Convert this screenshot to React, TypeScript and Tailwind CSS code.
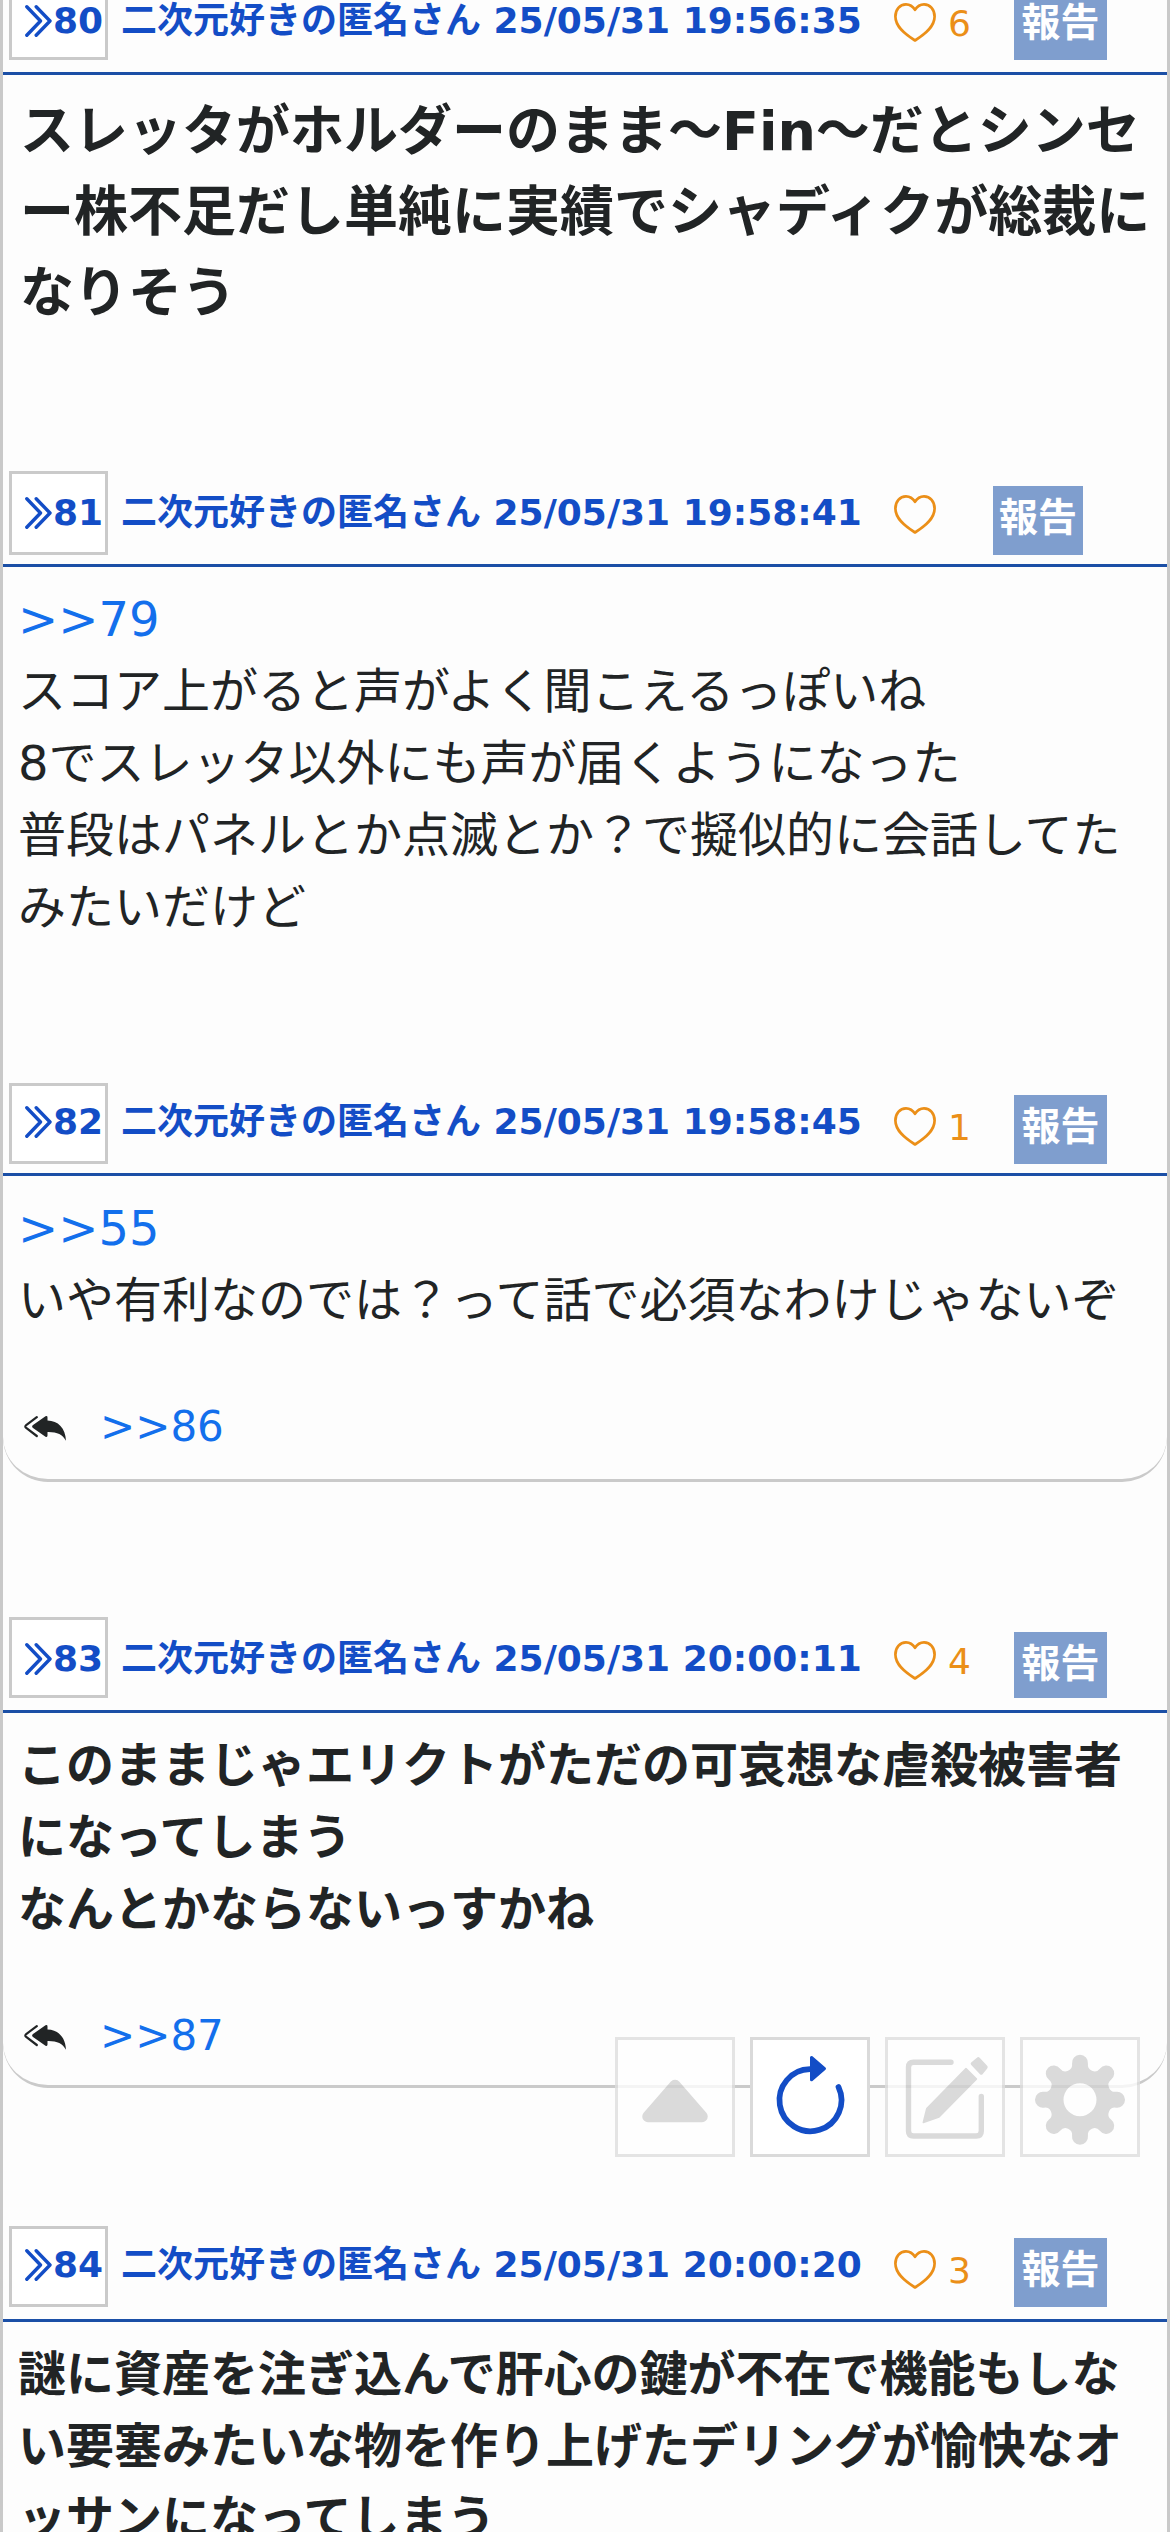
import type { ReactNode } from "react";
import clsx from "clsx";

type Post = {
  no: number;
  date: string;
  likes?: number;
  lines: ReactNode[];
  replies?: string;
  // spacing differs a little from post to post
  boxClass: string;
  titleClass: string;
  heartClass: string;
  countClass: string;
  reportClass: string;
  bodyClass: string;
  replyClass?: string;
  gapClass: string;
};

const posts: Post[] = [
  {
    no: 80,
    date: "25/05/31 19:56:35",
    likes: 6,
    lines: [
      "スレッタがホルダーのまま〜Fin〜だとシンセ",
      "ー株不足だし単純に実績でシャディクが総裁に",
      "なりそう",
    ],
    boxClass: "h-[84px] mb-3 pb-[18px]",
    titleClass: "mb-[33px]",
    heartClass: "mb-[30px]",
    countClass: "mb-[30px]",
    reportClass: "h-[69px] w-[93px] mb-3",
    bodyClass: "pl-[17px] text-[54px] leading-[81px] font-bold",
    gapClass: "mb-[137px]",
  },
  {
    no: 81,
    date: "25/05/31 19:58:41",
    lines: [
      <PostLink key="link">&gt;&gt;79</PostLink>,
      "スコア上がると声がよく聞こえるっぽいね",
      "8でスレッタ以外にも声が届くようになった",
      "普段はパネルとか点滅とか？で擬似的に会話してた",
      "みたいだけど",
    ],
    boxClass: "h-[84px] mb-[9px] pb-[21px]",
    titleClass: "mb-[33px]",
    heartClass: "mb-[30px]",
    countClass: "mb-[30px]",
    reportClass: "h-[69px] w-[90px] mb-[9px] -ml-[21px]",
    bodyClass: "pl-[15px] text-[48px] leading-[72px]",
    gapClass: "mb-[137px]",
  },
  {
    no: 82,
    date: "25/05/31 19:58:45",
    likes: 1,
    lines: [
      <PostLink key="link">&gt;&gt;55</PostLink>,
      "いや有利なのでは？って話で必須なわけじゃないぞ",
    ],
    replies: ">>86",
    boxClass: "h-[81px] mb-[9px] pb-[21px]",
    titleClass: "mb-[33px]",
    heartClass: "mb-[27px]",
    countClass: "mb-[27px]",
    reportClass: "h-[69px] w-[93px] mb-[9px]",
    bodyClass: "pl-[15px] text-[48px] leading-[72px]",
    replyClass: "h-[143px]",
    gapClass: "mb-[135px]",
  },
  {
    no: 83,
    date: "25/05/31 20:00:11",
    likes: 4,
    lines: [
      "このままじゃエリクトがただの可哀想な虐殺被害者",
      "になってしまう",
      "なんとかならないっすかね",
    ],
    replies: ">>87",
    boxClass: "h-[81px] mb-3 pb-[18px]",
    titleClass: "mb-[33px]",
    heartClass: "mb-[30px]",
    countClass: "mb-[30px]",
    reportClass: "h-[66px] w-[93px] mb-3",
    bodyClass: "pl-[15px] text-[48px] leading-[72px] font-bold",
    replyClass: "h-[140px]",
    gapClass: "mb-[138px]",
  },
  {
    no: 84,
    date: "25/05/31 20:00:20",
    likes: 3,
    lines: [
      "謎に資産を注ぎ込んで肝心の鍵が不在で機能もしな",
      "い要塞みたいな物を作り上げたデリングが愉快なオ",
      "ッサンになってしまう",
    ],
    boxClass: "h-[81px] mb-3 pb-[21px]",
    titleClass: "mb-9",
    heartClass: "mb-[30px]",
    countClass: "mb-[30px]",
    reportClass: "h-[69px] w-[93px] mb-3",
    bodyClass: "pl-[15px] text-[48px] leading-[72px] font-bold",
    gapClass: "mb-0",
  },
];

// eight round teeth joined by concave arcs
function gearPath(cx: number, cy: number) {
  const point = (deg: number) => {
    const a = (deg * Math.PI) / 180;
    return `${(cx + 36.83 * Math.cos(a)).toFixed(2)} ${(cy + 36.83 * Math.sin(a)).toFixed(2)}`;
  };
  let d = `M${point(-12.43)}`;
  for (let k = 0; k < 8; k++) {
    d += `A8 8 0 1 1 ${point(k * 45 + 12.43)}`;
    d += `A6.67 6.67 0 0 0 ${point((k + 1) * 45 - 12.43)}`;
  }
  return `${d}Z`;
}

function PostLink({ children }: { children: ReactNode }) {
  return <a className="text-[#136fec]">{children}</a>;
}

function ChevronsIcon() {
  return (
    <svg className="w-[27px] h-8 shrink-0" viewBox="0 0 27 32" fill="none" stroke="currentColor" strokeWidth={3.4} strokeLinecap="round" strokeLinejoin="round">
      <path d="M1.8 1.8 15.5 16 1.8 30.2M11.2 1.8 25 16 11.2 30.2" />
    </svg>
  );
}

function HeartIcon({ className }: { className?: string }) {
  return (
    <svg className={clsx("w-[42px] h-[39px] shrink-0", className)} viewBox="0 0 42 39" fill="none" stroke="#eb8f18" strokeWidth={2.7} strokeLinejoin="round">
      <path d="M21 6.8C18.6 3 15.6 1.4 12 1.4 5.8 1.4 1.4 6.5 1.4 13.5 1.4 24 11.5 31.5 21 37.5 30.5 31.5 40.6 24 40.6 13.5 40.6 6.5 36.2 1.4 30 1.4 26.4 1.4 23.4 3 21 6.8Z" />
    </svg>
  );
}

function ReplyIcon() {
  return (
    <svg className="mt-[3px] w-[42px] h-[25px] shrink-0" viewBox="0 0 42 25" fill="currentColor">
      <path d="M12.8 1.2 2.2 9q-1.8 1.5 0 3L12.8 20" fill="none" stroke="currentColor" strokeWidth={2.2} strokeLinecap="round" />
      <path d="M21.5.3q2-.8 2 1.2V4.6C34 4.8 41.5 12 42 24.8 38.5 18.5 33 15.8 23.500 16v3.6q0 2-2 1.2L9 12q-1.8-1.5 0-3Z" />
    </svg>
  );
}

function PostCard({ post }: { post: Post }) {
  return (
    <article className={clsx(post.gapClass, post.replies && "border-b-3 border-[#cacaca] rounded-b-[45px]")}>
      <header className="flex h-24 items-end border-b-3 border-[#1b4fa6] pl-1.5">
        <div className={clsx("flex w-[99px] shrink-0 items-end border-3 border-[#cacaca] bg-white pl-[13px]", post.boxClass)}>
          <a className="flex items-center gap-px text-[36px] leading-9 font-bold text-[#134dc6]">
            <ChevronsIcon />
            {post.no}
          </a>
        </div>
        <h2 className={clsx("ml-[13px] w-[773px] shrink-0 text-[36px] leading-9 font-bold whitespace-nowrap text-[#134dc6]", post.titleClass)}>
          二次元好きの匿名さん {post.date}
        </h2>
        <HeartIcon className={post.heartClass} />
        <span className={clsx("ml-3 w-[66px] shrink-0 text-[36px] leading-9 text-[#eb8f18]", post.countClass)}>{post.likes}</span>
        <button className={clsx("flex shrink-0 justify-center bg-[#7f9ece] pt-3 text-[39px] leading-10 font-bold text-white", post.reportClass)}>
          報告
        </button>
      </header>
      <div className={clsx("pt-4 whitespace-nowrap", post.bodyClass)}>
        {post.lines.map((line, i) => (
          <p key={i}>{line}</p>
        ))}
      </div>
      {post.replies && (
        <div className={clsx("flex items-start pt-[61px] pl-[21px]", post.replyClass)}>
          <div className="flex h-[60px] items-center gap-[34px] text-[42px] leading-[60px]">
            <ReplyIcon />
            <PostLink>{post.replies}</PostLink>
          </div>
        </div>
      )}
    </article>
  );
}

function ToolButton({ active, children }: { active?: boolean; children: ReactNode }) {
  return (
    <button
      className={clsx(
        "size-[120px] border-3 bg-white",
        active ? "border-[#dadada] text-[#134dc6]" : "border-[#dedede] text-[#d2d2d2] opacity-80",
      )}
    >
      <svg className="-m-[3px] size-[120px]" viewBox="0 0 120 120" fill="none" stroke="currentColor" strokeLinecap="round" strokeLinejoin="round">
        {children}
      </svg>
    </button>
  );
}

export default function App() {
  return (
    <div className="relative h-[2532px] w-[1170px] overflow-hidden bg-[#fdfdfd] font-['DejaVu_Sans','Noto_Sans_CJK_JP',sans-serif] text-[#212425]">
      <main className="h-[2532px] overflow-hidden border-x-3 border-[#c9c9c9]">
        <div className="-mt-[21px]">
          {posts.map((post) => (
            <PostCard key={post.no} post={post} />
          ))}
        </div>
      </main>

      {/* Floating tools */}
      <nav className="absolute top-[2037px] right-[30px] flex gap-[15px]">
        <ToolButton>
          <path d="M60 48.5 33 79.5H87Z" fill="currentColor" strokeWidth={11.5} />
        </ToolButton>
        <ToolButton active>
          <path d="M60 32.2A31 31 0 1 0 88.5 50" strokeWidth={5.7} />
          <path d="M61.5 20.5V42.8L74.5 31.7Z" fill="currentColor" strokeWidth={3} />
        </ToolButton>
        <ToolButton>
          <path d="M66 25.2H28.5Q23.5 25.2 23.5 30.2V94Q23.5 99 28.5 99H91.3Q96.3 99 96.3 94V59.5" strokeWidth={5.4} />
          <path d="M81 31.5 91.5 42 54 80 38.3 85.5 41.8 71.5Z" fill="currentColor" strokeWidth={1.5} />
          <path d="M93.2 22.2 100.7 30.2 96.2 35.7 87.7 26.7Z" fill="currentColor" strokeWidth={4} />
        </ToolButton>
        <ToolButton>
          <path d={`${gearPath(60, 62.7)}M76.5 62.7A16.5 16.5 0 1 0 43.5 62.7A16.5 16.5 0 1 0 76.5 62.7Z`} fill="currentColor" fillRule="evenodd" stroke="none" />
        </ToolButton>
      </nav>
    </div>
  );
}
